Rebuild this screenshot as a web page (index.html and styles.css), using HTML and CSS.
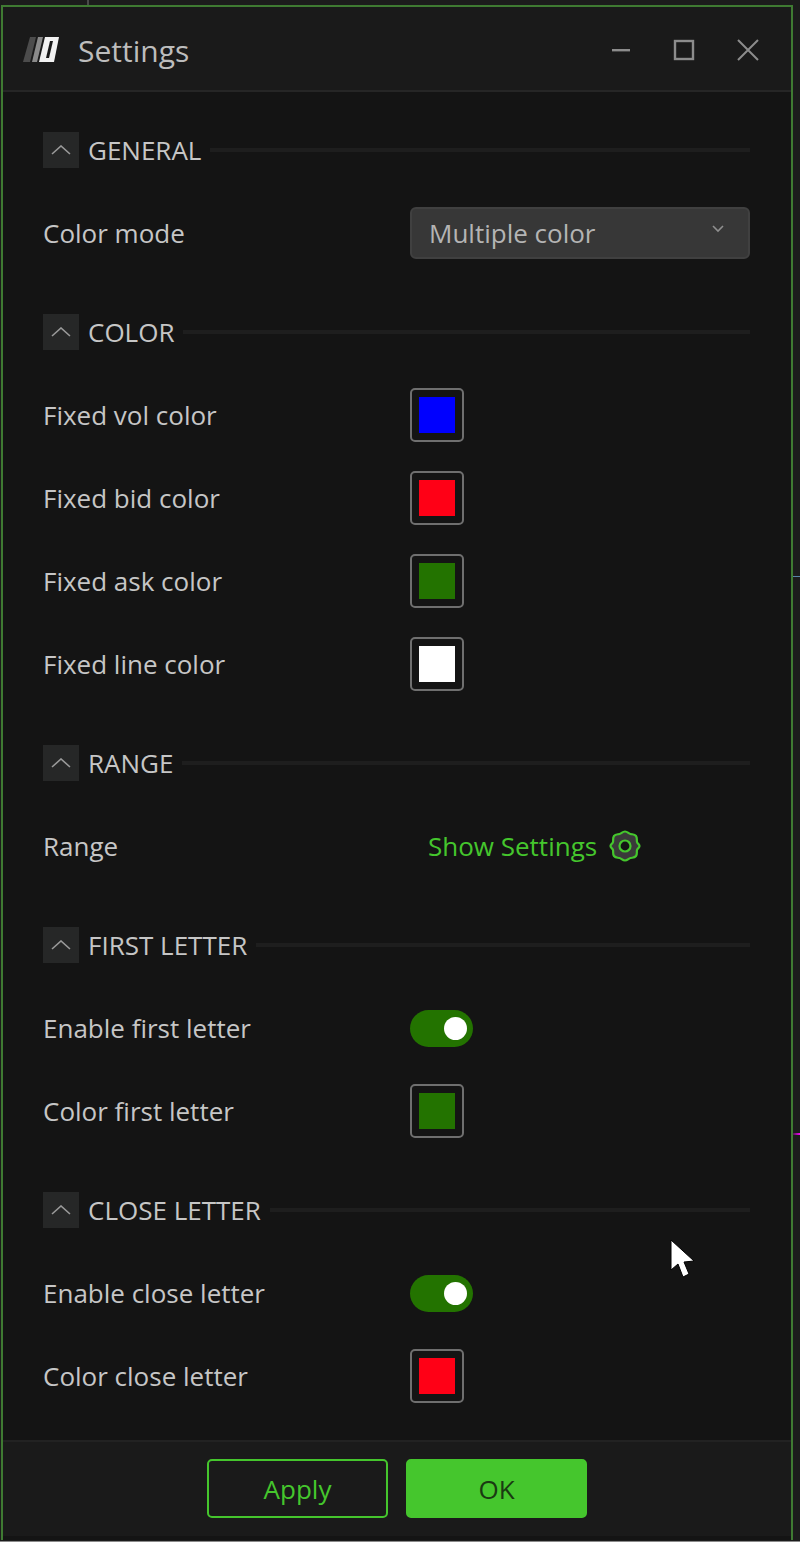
FILE: index.html
```html
<!DOCTYPE html>
<html lang="en">
<head>
<meta charset="utf-8">
<title>Settings</title>
<link rel="stylesheet" href="styles.css">
</head>
<body>
<span class="tick tick-top"></span>
<span class="tick tick-blue"></span>
<span class="tick tick-pink"></span>
<span class="tick tick-bottom"></span>
<div class="window">
  <header class="titlebar">
    <svg class="logo" width="36" height="25" viewBox="0 0 36 25">
      <polygon points="7,0 13,0 7,25 0,25" fill="#4c4c4c"/>
      <polygon points="15,0 20,0 14,25 9,25" fill="#8a8a8a"/>
      <polygon points="22,0 36,0 31,25 16,25" fill="#f2f2f2"/>
      <polygon points="27,4 30,4 26,21 23,21" fill="#1a1a1a"/>
    </svg>
    <span class="title">Settings</span>
    <div class="controls">
      <svg width="20" height="20" viewBox="0 0 20 20"><rect x="1" y="9" width="18" height="2.4" fill="#8c8c8c"/></svg>
      <svg width="22" height="22" viewBox="0 0 22 22"><rect x="2" y="2" width="18" height="18" fill="none" stroke="#8c8c8c" stroke-width="2.4"/></svg>
      <svg width="22" height="22" viewBox="0 0 22 22"><path d="M1 1L21 21M21 1L1 21" fill="none" stroke="#8c8c8c" stroke-width="2"/></svg>
    </div>
  </header>
  <main class="content">
    <section class="section">
      <div class="row">
        <span class="chev"><svg width="20" height="10" viewBox="0 0 20 10"><path d="M1 9L10 1L19 9" fill="none" stroke="#9a9a9a" stroke-width="1.6"/></svg></span>
        <span class="sec-title">GENERAL</span><span class="sec-line"></span>
      </div>
      <div class="row">
        <span class="label">Color mode</span>
        <div class="select"><span>Multiple color</span><svg class="caret" width="12" height="8" viewBox="0 0 12 8"><path d="M1 1L6 6L11 1" fill="none" stroke="#8f8f8f" stroke-width="1.6"/></svg></div>
      </div>
    </section>
    <section class="section">
      <div class="row">
        <span class="chev"><svg width="20" height="10" viewBox="0 0 20 10"><path d="M1 9L10 1L19 9" fill="none" stroke="#9a9a9a" stroke-width="1.6"/></svg></span>
        <span class="sec-title">COLOR</span><span class="sec-line"></span>
      </div>
      <div class="row"><span class="label">Fixed vol color</span><span class="swatch"><i class="blue"></i></span></div>
      <div class="row"><span class="label">Fixed bid color</span><span class="swatch"><i class="red"></i></span></div>
      <div class="row"><span class="label">Fixed ask color</span><span class="swatch"><i class="green"></i></span></div>
      <div class="row"><span class="label">Fixed line color</span><span class="swatch"><i class="white"></i></span></div>
    </section>
    <section class="section">
      <div class="row">
        <span class="chev"><svg width="20" height="10" viewBox="0 0 20 10"><path d="M1 9L10 1L19 9" fill="none" stroke="#9a9a9a" stroke-width="1.6"/></svg></span>
        <span class="sec-title">RANGE</span><span class="sec-line"></span>
      </div>
      <div class="row">
        <span class="label">Range</span>
        <div class="link"><span>Show Settings</span>
          <svg width="34" height="34" viewBox="0 0 34 34"><path d="M17 2.500c2.600 0 3.500 2 5.500 2.500 2 .5 4 0 5.500 2 1.500 2 .5 4 1 6 .5 2 2.500 2 2.500 4s-2 2-2.500 4c-.5 2 .5 4-1 6s-3.500 1.500-5.500 2c-2 .5-2.900 2.500-5.500 2.500s-3.500-2-5.500-2.500c-2-.5-4 0-5.500-2s-.5-4-1-6c-.5-2-2.500-2-2.500-4s2-2 2.500-4c.5-2-.5-4 1-6s3.500-1.500 5.500-2c2-.5 2.900-2.500 5.500-2.500z" fill="#3a3a3a" stroke="#45c62d" stroke-width="2.200"/><circle cx="17" cy="17" r="5.500" fill="#141414" stroke="#45c62d" stroke-width="2.200"/></svg>
        </div>
      </div>
    </section>
    <section class="section">
      <div class="row">
        <span class="chev"><svg width="20" height="10" viewBox="0 0 20 10"><path d="M1 9L10 1L19 9" fill="none" stroke="#9a9a9a" stroke-width="1.6"/></svg></span>
        <span class="sec-title">FIRST LETTER</span><span class="sec-line"></span>
      </div>
      <div class="row"><span class="label">Enable first letter</span><span class="toggle"><i></i></span></div>
      <div class="row"><span class="label">Color first letter</span><span class="swatch"><i class="green"></i></span></div>
    </section>
    <section class="section">
      <div class="row">
        <span class="chev"><svg width="20" height="10" viewBox="0 0 20 10"><path d="M1 9L10 1L19 9" fill="none" stroke="#9a9a9a" stroke-width="1.6"/></svg></span>
        <span class="sec-title">CLOSE LETTER</span><span class="sec-line"></span>
      </div>
      <div class="row"><span class="label">Enable close letter</span><span class="toggle"><i></i></span></div>
      <div class="row"><span class="label">Color close letter</span><span class="swatch"><i class="red"></i></span></div>
    </section>
  </main>
  <footer class="footer">
    <button class="btn btn-outline">Apply</button>
    <button class="btn btn-solid">OK</button>
  </footer>
  <svg class="cursor" width="26" height="40" viewBox="0 0 26 40"><path d="M1 1L1 31L8 25L13 38L19 35L14 23L24 22Z" fill="#fff" stroke="#000" stroke-width="1"/></svg>
</div>
</body>
</html>
```

FILE: styles.css
```css
* { box-sizing: border-box; }
html, body { margin: 0; height: 1542px; background: #1c1c1c; overflow: hidden; }
body { position: relative; padding: 5px 7px 2px 1px; font-family: "Open Sans", "Noto Sans", sans-serif; color: #c6c6c6; font-size: 26px; }
.tick { position: absolute; display: block; }
.tick-top { left: 87px; top: 0; width: 2px; height: 5px; background: #4a4a4a; }
.tick-blue { left: 793px; top: 576px; width: 7px; height: 1px; background: #5a86a8; }
.tick-pink { left: 793px; top: 1133px; width: 7px; height: 2px; background: linear-gradient(90deg, #4a1a4a, #f0f); }
.tick-bottom { left: 0; bottom: 0; width: 100%; height: 1px; background: #8a8a8a; }
.window { position: relative; width: 792px; height: 1535px; border: 2px solid #3f7a32; border-bottom: 0; background: #141414; display: flex; flex-direction: column; }
.titlebar { height: 85px; flex: none; background: #1a1a1a; border-bottom: 2px solid #262626; display: flex; align-items: center; padding: 2px 32px 0 20px; }
.logo { margin-right: 19px; filter: blur(.5px); flex: none; }
.title { font-size: 30px; color: #bdbdbd; line-height: 1; padding-top: 2px; }
.controls { margin-left: auto; display: flex; align-items: center; gap: 42px; }
.content { flex: 1; padding: 31px 41px 0 40px; display: flex; flex-direction: column; gap: 45px; }
.section { display: flex; flex-direction: column; gap: 29px; }
.row { height: 54px; display: flex; align-items: center; }
.chev { width: 36px; height: 36px; background: #262727; display: flex; align-items: center; justify-content: center; margin-right: 9px; flex: none; }
.sec-title { font-size: 26px; color: #c6c6c6; margin-right: 9px; }
.sec-line { flex: 1; height: 4px; background: #1e1e1e; }
.label { width: 367px; flex: none; color: #c6c6c6; }
.select { flex: 1; height: 52px; background: #373737; border: 2px solid #404040; border-radius: 6px; display: flex; align-items: center; justify-content: space-between; padding: 0 24px 0 17px; color: #b4b4b4; }
.caret { margin-bottom: 8px; }
.swatch { width: 54px; height: 54px; border: 2px solid #6f6f6f; border-radius: 5px; padding: 7px; display: block; background: #141414; }
.swatch i { display: block; width: 100%; height: 100%; }
.blue { background: #0000ff; }
.red { background: #ff0016; }
.green { background: #237300; }
.white { background: #fff; }
.toggle { width: 63px; height: 37px; border-radius: 19px; background: #237300; display: flex; align-items: center; justify-content: flex-end; padding-right: 6px; }
.toggle i { width: 23px; height: 23px; border-radius: 50%; background: #fff; }
.link { display: flex; align-items: center; gap: 11px; padding-left: 18px; color: #45c62d; }
.footer { height: 96px; margin-bottom: 4px; flex: none; background: #1a1a1a; border-top: 2px solid #222; display: flex; align-items: flex-start; padding: 17px 0 0 204px; gap: 18px; }
.btn { width: 181px; height: 59px; border-radius: 5px; font: 26px "Open Sans", "Noto Sans", sans-serif; }
.btn-outline { background: transparent; border: 2px solid #45c62d; color: #45c62d; }
.btn-solid { background: #45c62d; border: 2px solid #45c62d; color: #1a3a12; }
.cursor { position: absolute; left: 667px; top: 1232px; }
```
